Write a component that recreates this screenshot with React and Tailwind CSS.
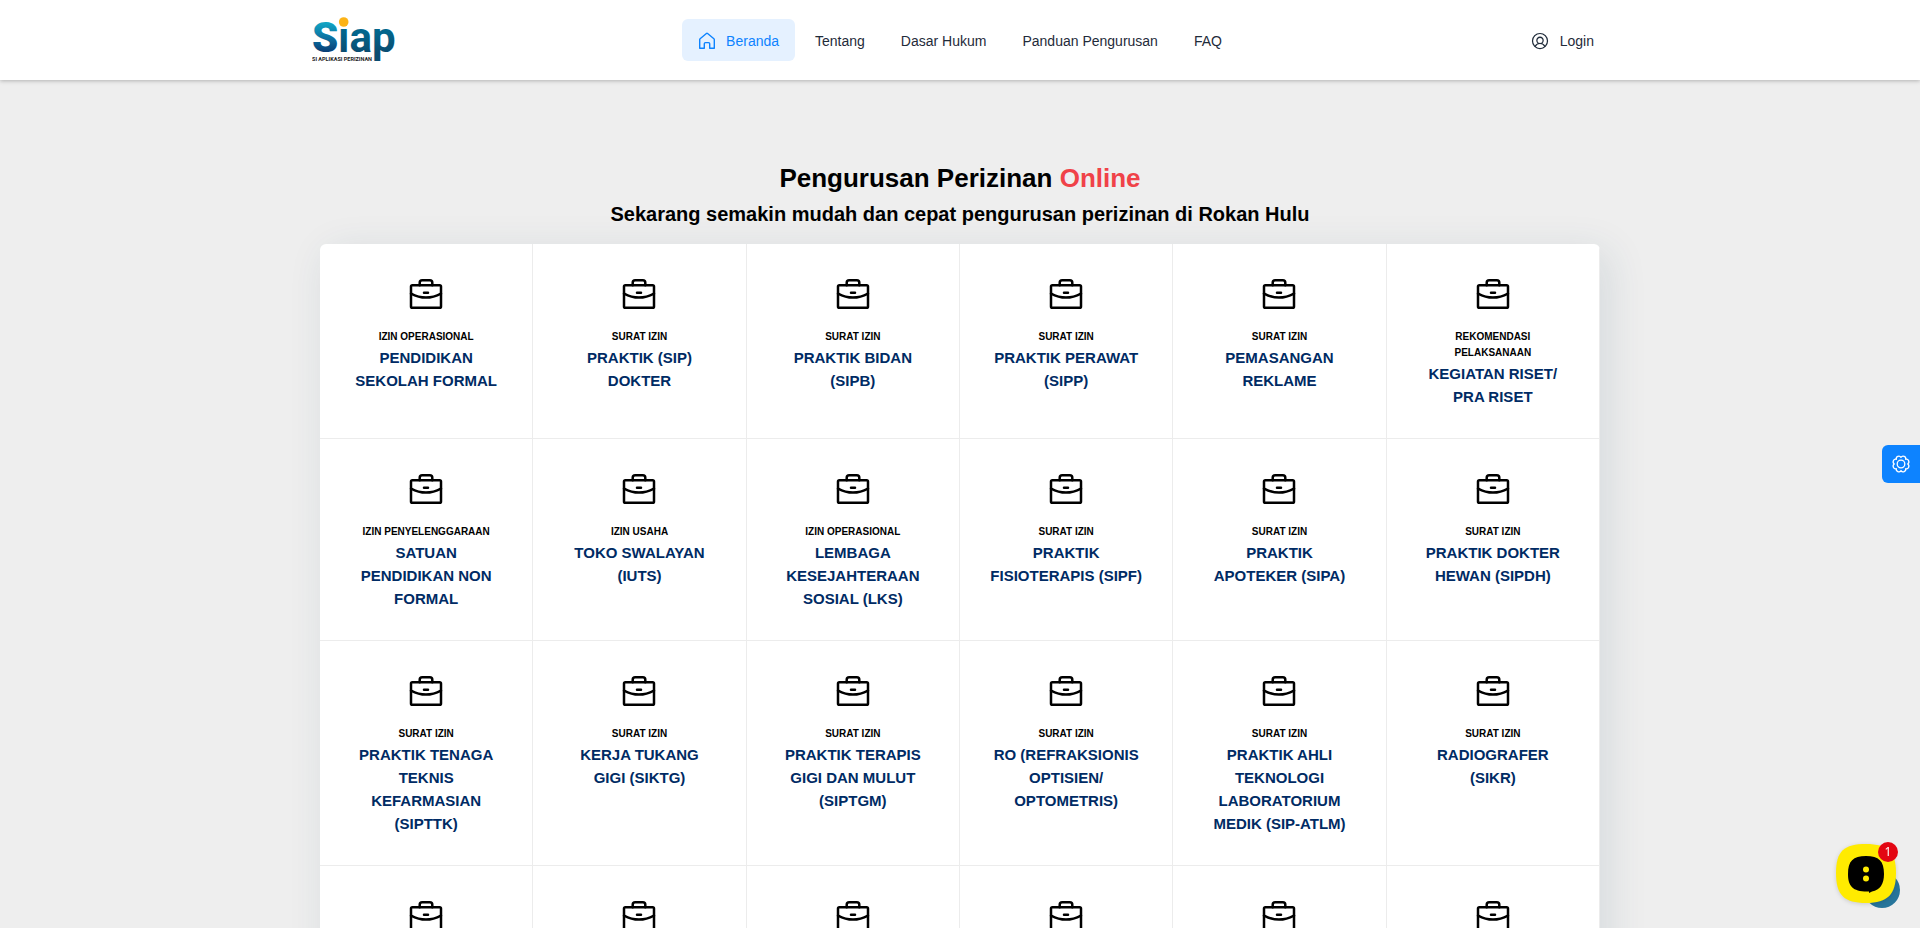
import React from 'react';
import { PiUserCircle } from 'react-icons/pi';

const HouseIcon = ({ className }) => (
  <svg className={className} viewBox="1 1 18 18" fill="none" stroke="currentColor" strokeWidth="1.4" strokeLinecap="round" strokeLinejoin="round">
    <path d="M2.7 17.3V8.6c0-.4.2-.7.4-.9l6.3-5.2a1 1 0 0 1 1.2 0l6.3 5.2c.2.2.4.5.4.9v8.7h-4.6v-4.6c0-.7-.4-1.1-1.1-1.1H8.4c-.7 0-1.1.4-1.1 1.1v4.6Z" />
  </svg>
);

const BriefcaseIcon = ({ className }) => (
  <svg className={className} viewBox="0 0 40 40" fill="none" stroke="currentColor" strokeWidth="2.5" strokeLinecap="round" strokeLinejoin="round">
    <rect x="5" y="10.2" width="30" height="22.6" rx="1.4" />
    <path d="M13.7 10.2V7.7a2.5 2.5 0 0 1 2.5-2.5h7.6a2.5 2.5 0 0 1 2.5 2.5v2.5" />
    <path d="M5 18.6Q20 26.6 35 18.6" />
    <path d="M18 17.7h4" />
  </svg>
);

const GearIcon = ({ className }) => (
  <svg className={className} viewBox="0 0 20 20" fill="none" stroke="currentColor" strokeWidth="1.3" strokeLinejoin="round">
    <circle cx="10" cy="10" r="3.8" />
    <path d="M10 3.3A2.6 2.6 0 0 1 14.7 5.3 2.6 2.6 0 0 1 16.7 10 2.6 2.6 0 0 1 14.7 14.7 2.6 2.6 0 0 1 10 16.7 2.6 2.6 0 0 1 5.3 14.7 2.6 2.6 0 0 1 3.3 10 2.6 2.6 0 0 1 5.3 5.3 2.6 2.6 0 0 1 10 3.3Z" />
  </svg>
);

const navItems = [
  { label: 'Beranda', icon: HouseIcon, active: true },
  { label: 'Tentang' },
  { label: 'Dasar Hukum' },
  { label: 'Panduan Pengurusan' },
  { label: 'FAQ' }
];

const services = [
  { type: 'IZIN OPERASIONAL', name: 'PENDIDIKAN SEKOLAH FORMAL' },
  { type: 'SURAT IZIN', name: 'PRAKTIK (SIP) DOKTER' },
  { type: 'SURAT IZIN', name: 'PRAKTIK BIDAN (SIPB)' },
  { type: 'SURAT IZIN', name: 'PRAKTIK PERAWAT (SIPP)' },
  { type: 'SURAT IZIN', name: 'PEMASANGAN REKLAME' },
  { type: 'REKOMENDASI PELAKSANAAN', name: 'KEGIATAN RISET/ PRA RISET' },
  { type: 'IZIN PENYELENGGARAAN', name: 'SATUAN PENDIDIKAN NON FORMAL' },
  { type: 'IZIN USAHA', name: 'TOKO SWALAYAN (IUTS)' },
  { type: 'IZIN OPERASIONAL', name: 'LEMBAGA KESEJAHTERAAN SOSIAL (LKS)' },
  { type: 'SURAT IZIN', name: 'PRAKTIK FISIOTERAPIS (SIPF)' },
  { type: 'SURAT IZIN', name: 'PRAKTIK APOTEKER (SIPA)' },
  { type: 'SURAT IZIN', name: 'PRAKTIK DOKTER HEWAN (SIPDH)' },
  { type: 'SURAT IZIN', name: 'PRAKTIK TENAGA TEKNIS KEFARMASIAN (SIPTTK)' },
  { type: 'SURAT IZIN', name: 'KERJA TUKANG GIGI (SIKTG)' },
  { type: 'SURAT IZIN', name: 'PRAKTIK TERAPIS GIGI DAN MULUT (SIPTGM)' },
  { type: 'SURAT IZIN', name: 'RO (REFRAKSIONIS OPTISIEN/ OPTOMETRIS)' },
  { type: 'SURAT IZIN', name: 'PRAKTIK AHLI TEKNOLOGI LABORATORIUM MEDIK (SIP-ATLM)' },
  { type: 'SURAT IZIN', name: 'RADIOGRAFER (SIKR)' },
  {}, {}, {}, {}, {}, {}
];

const Logo = () => (
  <svg className="h-[54px] w-[88px]" viewBox="0 0 88 54" role="img" aria-label="Siap">
    <defs>
      <linearGradient id="logo-s" x1="0" y1="0" x2="0" y2="1">
        <stop offset="0.2" stopColor="#12a5c4" />
        <stop offset="0.55" stopColor="#0b6a9c" />
        <stop offset="0.8" stopColor="#083c74" />
      </linearGradient>
      <linearGradient id="logo-text" x1="0" y1="0" x2="0" y2="1">
        <stop offset="0.4" stopColor="#03668c" />
        <stop offset="0.8" stopColor="#0a4c70" />
      </linearGradient>
    </defs>
    <text x="0" y="39" fontSize="42" fontWeight="900" fontFamily="Roboto, sans-serif" fill="url(#logo-s)">S</text>
    <text x="26" y="39" fontSize="42" fontWeight="700" fontFamily="Roboto, sans-serif" fill="url(#logo-text)">ıap</text>
    <circle cx="31.7" cy="9" r="4.8" fill="#fcb316" />
    <text x="0" y="47.5" fontSize="5.5" fontWeight="700" fontFamily="Roboto, sans-serif" fill="#222">SI APLIKASI PERIZINAN</text>
  </svg>
);

const Header = () => (
  <header className="relative z-10 bg-white shadow-[0_1px_4px_rgba(0,0,0,0.25)]">
    <div className="mx-auto flex h-20 max-w-[1320px] items-center px-3">
      <div className="flex-1">
        <a href="#" className="inline-block align-middle">
          <Logo />
        </a>
      </div>
      <nav className="flex gap-1">
        {navItems.map(({ label, icon: Icon, active }) => (
          <a
            key={label}
            href="#"
            className={`flex h-[42px] items-center gap-2.5 rounded-md px-4 pt-0.5 text-sm ${active ? 'bg-[#e5f1ff] text-[#0d83ff]' : 'text-[#1f2b3a]'}`}
          >
            {Icon && <Icon className="size-[18px]" />}
            {label}
          </a>
        ))}
      </nav>
      <div className="flex flex-1 justify-end">
        <a href="#" className="flex h-[42px] items-center gap-2.5 px-3.5 pt-0.5 text-sm text-[#1f2b3a]">
          <PiUserCircle className="size-5" />
          Login
        </a>
      </div>
    </div>
  </header>
);

const ServiceCard = ({ type, name }) => (
  <a href="#" className="flex flex-col items-center border-r border-b border-[#ececec] px-[30px] pt-[31px] pb-[30px] text-center font-bold">
    <BriefcaseIcon className="size-10 text-black" />
    {type && <span className="mt-3.5 text-[10px] leading-4 text-black">{type}</span>}
    {name && <span className="mt-px text-[15px] leading-[23px] text-[#002b64]">{name}</span>}
  </a>
);

const ChatWidget = () => (
  <button type="button" aria-label="Chat" className="fixed right-5 bottom-5 size-16">
    <span className="absolute right-0 bottom-0 size-9 rounded-full bg-[#27759b]" />
    <svg className="absolute top-0 left-0 size-[60px] drop-shadow-sm" viewBox="0 0 60 60">
      <path d="M30 0C52 0 60 8 60 29S52 59 30 59 0 51 0 29 8 0 30 0Z" fill="#ffeb00" />
      <path d="M30 12c13 0 18 5 18 18 0 10-4 16-12 17.500l-3 1.500v-1.500c-16 .5-21-5-21-17.500 0-13 5-18 18-18Z" fill="#000" />
      <circle cx="30" cy="25.500" r="3" fill="#ffeb00" />
      <circle cx="30" cy="34.500" r="3" fill="#ffeb00" />
    </svg>
    <span className="absolute -top-0.5 right-0.5 flex size-5 items-center justify-center rounded-full bg-[#e30613] font-['Noto_Sans',sans-serif] text-xs text-white">1</span>
  </button>
);

const App = () => (
  <div className="min-h-screen bg-[#eeeeee] font-['Liberation_Sans',Arial,sans-serif]">
    <Header />
    <main className="mx-auto max-w-[1304px] px-3 pt-20">
      <div className="text-center font-bold text-black">
        <h1 className="text-[26px] leading-9">
          Pengurusan Perizinan <span className="text-[#f04248]">Online</span>
        </h1>
        <h2 className="text-xl leading-9">Sekarang semakin mudah dan cepat pengurusan perizinan di Rokan Hulu</h2>
      </div>
      <div className="mt-3 grid grid-cols-6 overflow-hidden rounded-md bg-white shadow-[8px_8px_40px_rgba(30,70,100,0.12)]">
        {services.map((service, index) => (
          <ServiceCard key={index} {...service} />
        ))}
      </div>
    </main>
    <button type="button" aria-label="Pengaturan" className="fixed top-[445px] right-0 flex h-[38px] w-[38px] items-center justify-center rounded-l-md bg-[#0d83ff] text-white">
      <GearIcon className="size-5" />
    </button>
    <ChatWidget />
  </div>
);

export default App;
